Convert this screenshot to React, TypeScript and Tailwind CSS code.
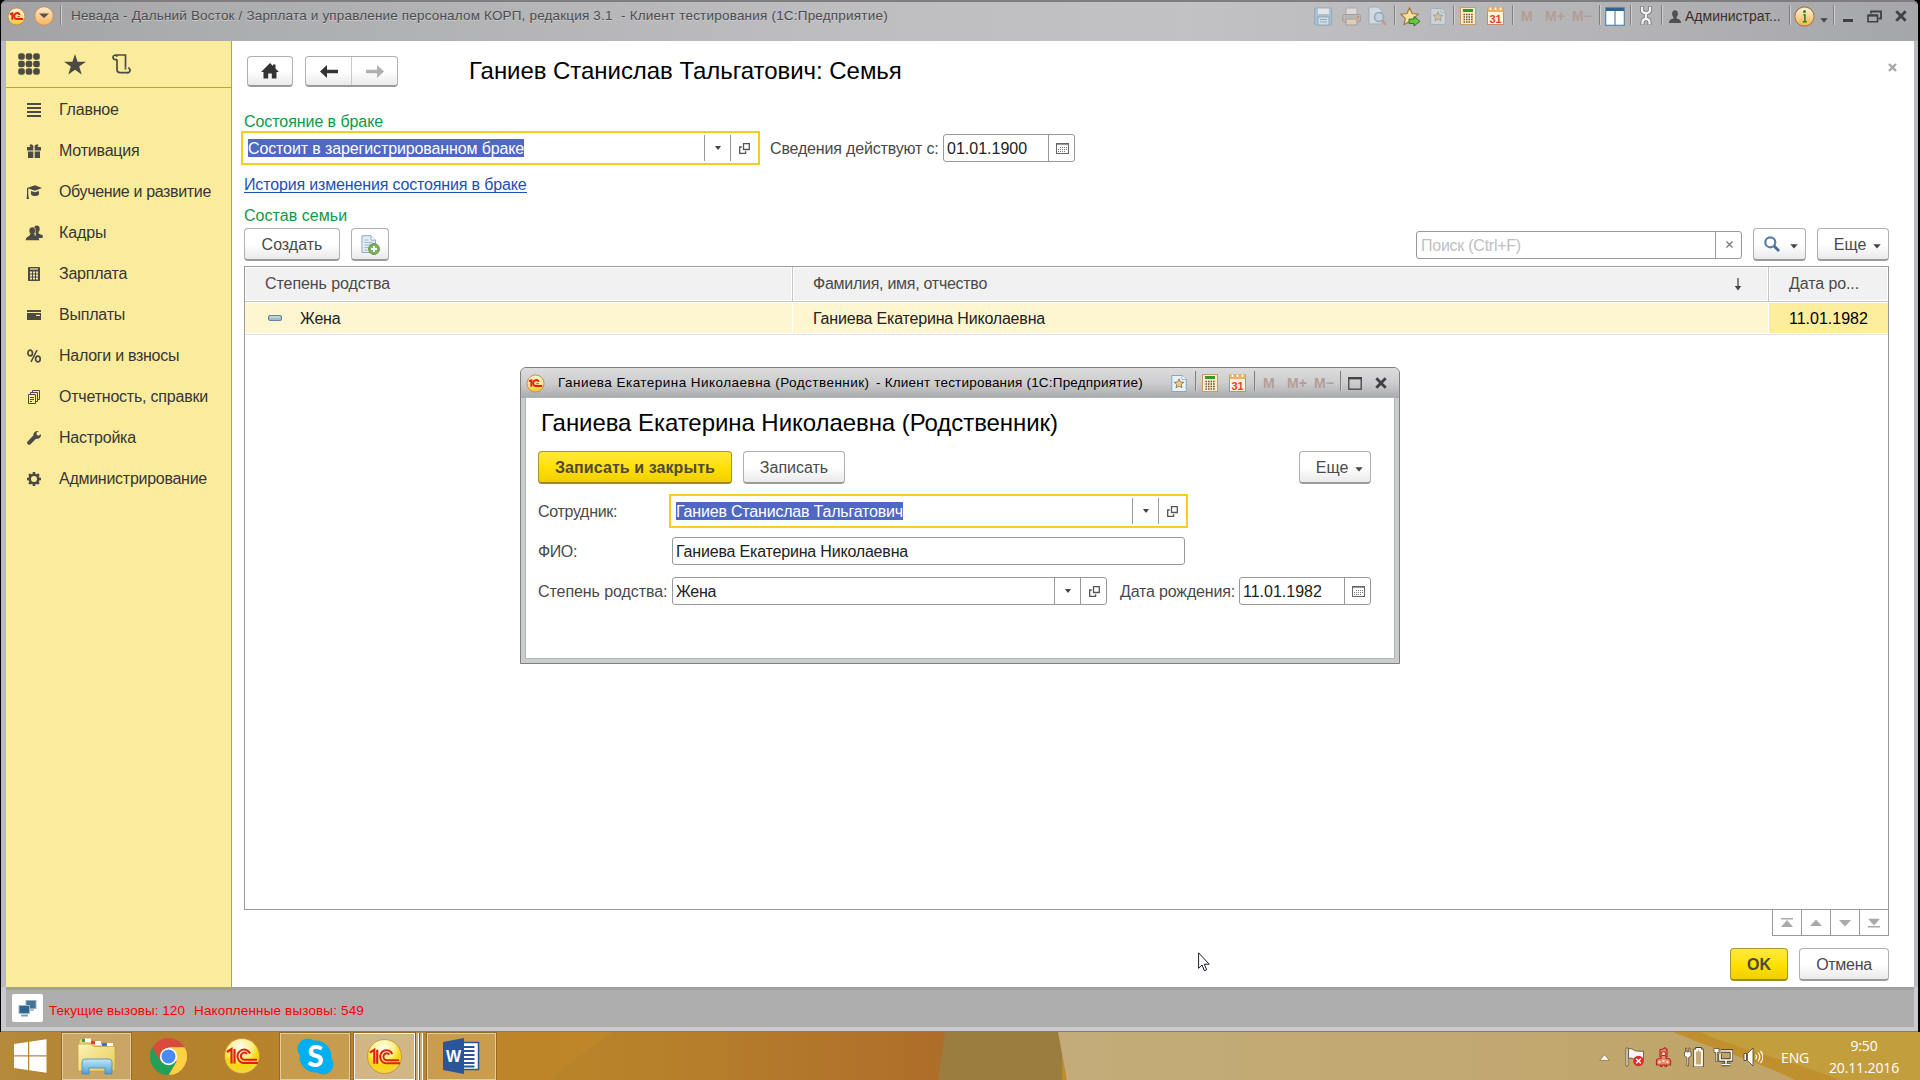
import React from "react";

type Cls = { className?: string };

/* ---------- logos and small drawings ---------- */

function Logo1C({ size }: { size: number }) {
  return (
    <svg width={size} height={size} viewBox="0 0 36 36" className="block shrink-0">
      <defs>
        <radialGradient id="ball" cx="0.45" cy="0.25" r="0.85">
          <stop offset="0" stopColor="#fffef0" />
          <stop offset="0.4" stopColor="#fdf08a" />
          <stop offset="0.6" stopColor="#f8d80c" />
          <stop offset="0.85" stopColor="#f2d640" />
          <stop offset="1" stopColor="#c9a23a" />
        </radialGradient>
      </defs>
      <circle cx="18" cy="18" r="17.5" fill="url(#ball)" stroke="#c08a3c" strokeWidth="0.8" />
      <path d="M3 14 L7.5 11 V25.5 M10.5 11 V25.5" fill="none" stroke="#e31e10" strokeWidth="2.2" />
      <path
        d="M26 15.5 A6.5 6.8 0 1 0 21 25 H34 M23 16 A3.4 3.6 0 1 0 20.5 21.8 H33"
        fill="none"
        stroke="#e31e10"
        strokeWidth="2"
      />
    </svg>
  );
}

function SmallLogo({ size }: { size: number }) {
  return (
    <svg width={size} height={size} viewBox="0 0 20 20" className="block shrink-0">
      <defs>
        <linearGradient id="sb" x1="0" y1="0" x2="0" y2="1">
          <stop offset="0" stopColor="#fdf3cf" />
          <stop offset="0.6" stopColor="#fbe48a" />
          <stop offset="1" stopColor="#f7c610" />
        </linearGradient>
      </defs>
      <circle cx="10" cy="10" r="9" fill="url(#sb)" stroke="#b98a5a" strokeWidth="1" />
      <path d="M3 7.6 L5.6 6.6 V13.4" fill="none" stroke="#e02010" strokeWidth="2" />
      <path d="M13.4 8.2 A3.1 3.1 0 1 0 11 12.6 H17" fill="none" stroke="#e02010" strokeWidth="2" />
      <path d="M11 10.2 H13.5" stroke="#e02010" strokeWidth="1" />
    </svg>
  );
}

const Caret = ({ className = "" }: Cls) => (
  <svg width="8" height="5" viewBox="0 0 8 5" className={"block shrink-0 " + className}>
    <path d="M0.3 0.3 H7.7 L4 4.6 Z" fill="#444" />
  </svg>
);

const SmallCaret = () => (
  <svg width="6" height="4" viewBox="0 0 6 4" className="block">
    <path d="M0 0 H6 L3.5 3.6 H2.5 Z" fill="#444" />
  </svg>
);

const OpenIcon = () => (
  <svg width="11" height="11" viewBox="0 0 11 11" className="block">
    <path d="M4.5 0.7 H10.3 V6.5 H4.5 Z" fill="none" stroke="#555" strokeWidth="1.3" />
    <path d="M2.8 4 H0.7 V10.3 H6.6 V8.2" fill="none" stroke="#555" strokeWidth="1.3" />
  </svg>
);

const CalIcon = () => (
  <svg width="13" height="11" viewBox="0 0 13 11" className="block" shapeRendering="crispEdges">
    <rect x="0.5" y="0.5" width="12" height="10" fill="#fff" stroke="#666" />
    <rect x="1" y="1" width="11" height="1" fill="#999" />
    <path d="M4 4.500h1m1 0h1m1 0h1m1 0h1M2 6.500h1m1 0h1m1 0h1m1 0h1m1 0h1M2 8.500h1m1 0h1m1 0h1m1 0h1" stroke="#777" strokeWidth="1" />
  </svg>
);

const DocStar = ({ className = "" }: Cls) => (
  <svg width="16" height="17" viewBox="0 0 16 17" className={"block shrink-0 " + className}>
    <path d="M0.8 0.5 H11 L15.3 4.5 V16.5 H0.8 Z" fill="#e6f1f8" stroke="#87a7bf" />
    <path d="M11 0.5 V4.5 H15.3" fill="#fff" stroke="#87a7bf" strokeWidth="0.8" />
    <path d="M8 3.8 L9.4 7 L12.8 7.3 L10.2 9.5 L11 12.8 L8 11 L5 12.8 L5.8 9.5 L3.2 7.3 L6.6 7 Z" fill="#f6cf7c" stroke="#866a4a" strokeWidth="0.8" />
  </svg>
);

const Calc = ({ className = "" }: Cls) => (
  <svg width="16" height="18" viewBox="0 0 16 18" className={"block shrink-0 " + className}>
    <rect x="0.5" y="0.5" width="15" height="17" fill="#fdecc4" stroke="#c79a68" />
    <rect x="3" y="2" width="10" height="3" fill="#2f9a28" />
    <path d="M3.500 7.500h1.500m1 0h1.500m1 0h1.500M3.500 10h1.500m1 0h1.500m1 0h1.500M3.500 12.500h1.500m1 0h1.500m1 0h1.500M3.500 15h1.500m1 0h1.500m1 0h1.500" stroke="#6a553c" strokeWidth="1.400" />
    <path d="M11 7.500h1.700" stroke="#e03020" strokeWidth="1.5" />
    <path d="M11 10h1.700M11 12.500h1.700M11 15h1.700" stroke="#6a553c" strokeWidth="1.400" />
  </svg>
);

const Cal31 = ({ className = "" }: Cls) => (
  <svg width="17" height="18" viewBox="0 0 17 18" className={"block shrink-0 " + className}>
    <rect x="0.5" y="1" width="16" height="16.5" fill="#fff3e0" stroke="#c98a68" />
    <rect x="0.5" y="0.5" width="16" height="4.5" fill="#e9b268" />
    <path d="M3.5 0.5 V3 M8.5 0.5 V3 M13.5 0.5 V3" stroke="#fff" strokeWidth="1.6" />
    <text x="8.6" y="15.8" textAnchor="middle" fontFamily="Liberation Sans" fontWeight="bold" fontSize="11" fill="#e8402a">31</text>
  </svg>
);

const Sep = ({ className = "" }: Cls) => (
  <div className={"w-px h-5 shrink-0 self-start mt-[3px] bg-[#808083] shadow-[1px_0_0_#cfcfd2] " + className} />
);

/* ---------- form pieces ---------- */

const btn =
  "flex items-center justify-center h-[33px] pt-[2px] rounded-[4px] border border-[#b0b0b0] border-b-2 border-b-[#9a9a9a] bg-gradient-to-b from-white from-50% to-[#eaeaea] text-[#4a4a4a]";
const yellowBtn =
  "flex items-center justify-center h-[33px] pt-[2px] rounded-[4px] border border-[#a8952a] border-b-2 border-b-[#9f8a1c] bg-gradient-to-b from-[#ffe93a] via-[#ffe100] to-[#f0cf00] font-bold text-[#4d4a3a]";

function Side({ children, tall }: { children: React.ReactNode; tall?: boolean }) {
  return <div className={"w-[26px] pl-[1px] flex items-center justify-center border-l border-[#999] " + (tall ? "h-[26px]" : "h-full")}>{children}</div>;
}

function Picker({ value, className, focused, text }: { value: string; className: string; focused?: boolean; text: string }) {
  return (
    <div className={(focused ? "h-[34px] border-2 border-[#facc1e] pl-[5px] pr-[2px] " : "h-[28px] border border-[#999] rounded-[3px] pl-[3px] ") + "flex items-center bg-white " + className}>
      <div className="flex-1 flex">
        <span className={(focused ? "bg-[#4f68c4] text-white " : "text-[#222] ") + "h-[18px] leading-[20px] whitespace-nowrap " + text}>{value}</span>
      </div>
      <Side tall={focused}><SmallCaret /></Side>
      <Side tall={focused}><OpenIcon /></Side>
    </div>
  );
}

function DateField({ value }: { value: string }) {
  return (
    <div className="w-[132px] h-[28px] border border-[#999] rounded-[3px] bg-white flex items-center pl-[3px]">
      <span className="flex-1 pt-[2px] text-[#222]">{value}</span>
      <Side><CalIcon /></Side>
    </div>
  );
}

/* ---------- sidebar ---------- */

const G = "#4b4a45";
const sections: { label: string; track: string; icon: React.ReactNode }[] = [
  { label: "Главное", track: "tracking-[-0.2px]", icon: <path d="M0 1h14M0 5h14M0 9h14M0 13h14" stroke={G} strokeWidth="1.8" /> },
  {
    label: "Мотивация", track: "tracking-[-0.2px]",
    icon: <g fill={G}><path d="M0 3h6.3v3.4H0zM7.7 3H14v3.4H7.7zM1 7.4h5.3V14H1zM7.7 7.4H13V14H7.7z" /><path d="M6.6 3C3 3 2 2 2.8 .9 4-.4 6 .8 6.6 3zM7.4 3C11 3 12 2 11.2 .9 10-.4 8 .8 7.4 3z" /></g>,
  },
  {
    label: "Обучение и развитие", track: "tracking-[-0.345px]",
    icon: <g fill={G}><path d="M0 3L8 .3 15 3 8 5.8z" /><path d="M4 6l4 1.3L12 6v3.5c-2 2-6 2-8 0z" /><path d="M0 3h1.3v6.5L2 14H-.4L0 9.5z" /></g>,
  },
  {
    label: "Кадры", track: "tracking-[-0.1px]",
    icon: <g fill={G}><ellipse cx="9.800" cy="3" rx="2.900" ry="3.400" /><path d="M8.500 6h3v1.500l4.200 1.800V12H9z" /><ellipse cx="5.300" cy="4.800" rx="3.300" ry="3.900" stroke="#fbeb9e" strokeWidth=".6" /><path d="M-1.200 14.300c0-4.300 3.800-3.300 4.500-6.300h4c.7 3 5 2 5 6.300z" /></g>,
  },
  {
    label: "Зарплата", track: "tracking-[-0.25px]",
    icon: <g><rect x="1" y="0" width="12" height="14" rx=".8" fill={G} /><path d="M3 2h8" stroke="#fbeb9e" strokeWidth="1.2" /><path d="M3 5.500h2m1 0h2m1 0h2M3 8.500h2m1 0h2m1 0h2M3 11.500h2m1 0h2m1 0h2" stroke="#fbeb9e" strokeWidth="2" /></g>,
  },
  { label: "Выплаты", track: "tracking-[-0.2px]", icon: <g fill={G}><path d="M0 2h14v2H0zM0 5h14v7H0z" /><path d="M9 6.800h4v1.200H9z" fill="#fbeb9e" /></g> },
  { label: "Налоги и взносы", track: "tracking-[-0.28px]", icon: <g fill="none" stroke={G}><ellipse cx="3.200" cy="4" rx="2.300" ry="2.900" strokeWidth="1.700" /><ellipse cx="10.900" cy="10" rx="2.300" ry="2.900" strokeWidth="1.700" /><path d="M10 1.200L4 12.900" strokeWidth="1.500" /></g> },
  { label: "Отчетность, справки", track: "tracking-[-0.21px]", icon: <g fill="none" stroke={G} strokeWidth="1"><path d="M1.500 4.500h7v9h-7zM3.500 4V2.500h7v9H9M5.500 2V.5h7v9H11" /><path d="M3 7.500h4M3 9.500h4M3 11.500h2" /></g> },
  { label: "Настройка", track: "tracking-[-0.2px]", icon: <path d="M14 3.200l-2.800 1.600-1.700-1.300L9.700 1.500 11.600.2C9-.5 6.300 1 6.300 4.500L.6 10.600c-1.600 2 1 4.300 2.900 2.700L9 7.800c3 .6 5.300-1.600 5-4.600z" fill={G} /> },
  {
    label: "Администрирование", track: "tracking-[-0.27px]",
    icon: <g><circle cx="7" cy="7" r="4.300" fill="none" stroke={G} strokeWidth="2.600" /><g stroke={G} strokeWidth="2.600"><path d="M7 0v2.500M7 11.500V14M0 7h2.500M11.500 7H14M2.100 2.100l1.600 1.600M10.300 10.300l1.600 1.600M2.100 11.900l1.600-1.600M10.300 3.700l1.600-1.600" /></g></g>,
  },
];

function Sidebar() {
  return (
    <nav className="w-[226px] shrink-0 bg-[#fbec9d] border-r border-[#b9a82a]">
      <div className="h-[47px] border-b border-[#b9a82a] flex items-center pl-3 gap-6">
        <svg width="22" height="22" viewBox="0 0 22 22" fill={G}>
          {[3.5, 11, 18.5].map((y) => [3.5, 11, 18.5].map((x) => <rect key={x + "-" + y} x={x - 3.3} y={y - 3.3} width="6.6" height="6.600" rx="2.4" />))}
        </svg>
        <svg width="22" height="21" viewBox="0 0 22 21" fill={G}><path d="M11 0l2.600 7.700H22l-6.800 4.900 2.500 8L11 15.700l-6.700 4.900 2.500-8L0 7.700h8.400z" /></svg>
        <svg width="21" height="20" viewBox="0 0 21 20" fill="none" stroke={G} strokeWidth="1.700" className="ml-[2px]">
          <path d="M3.200 1H13.500V13.500M5 5.500V15.500C5 18 6 18.700 8 18.700H17M5 5.600H3.200a2.200 2.200 0 1 1 2-3M13.500 13.700v1.800M13.500 18a2.600 2.600 0 1 0 2.800-4.200" />
        </svg>
      </div>
      <div className="pt-px">
        {sections.map((s) => (
          <div key={s.label} className="h-[41px] flex items-center pl-[21px] gap-[18px] text-[#363636]">
            <svg width="14" height="14" viewBox="0 0 14 14" className="overflow-visible">{s.icon}</svg>
            <span className={"whitespace-nowrap " + s.track}>{s.label}</span>
          </div>
        ))}
      </div>
    </nav>
  );
}

/* ---------- window title bar ---------- */

const Mem = ({ className, children }: { className: string; children: string }) => (
  <span className={"font-bold text-[14px] leading-none text-[#b39d95] whitespace-nowrap " + className}>{children}</span>
);

function TitleBar() {
  return (
    <header className="h-[41px] shrink-0 border-t-2 border-[#7f7d80] rounded-t-[6px] bg-[linear-gradient(90deg,#a2a2a5_0%,#aaabad_8%,#bebec0_45%,#c2c2c4_62%,#b3b3b6_85%,#a5a6aa_100%)]">
      <div className="h-[28px] flex items-center pl-[6px]">
        <SmallLogo size={19} />
        <svg width="20" height="20" viewBox="0 0 20 20" className="ml-[8px]">
          <defs><linearGradient id="or" x1="0" y1="0" x2="0" y2="1"><stop offset="0" stopColor="#fdeacb" /><stop offset="1" stopColor="#f5b45c" /></linearGradient></defs>
          <circle cx="10" cy="10" r="9.300" fill="url(#or)" stroke="#c98e58" />
          <path d="M5 7.500h10L10 12z" fill="#5c5048" />
        </svg>
        <Sep className="ml-[6px]" />
        <span className="ml-[10px] w-[550px] text-[13.5px] tracking-[0.17px] text-[#4b4b4e] whitespace-nowrap [text-shadow:0_1px_0_#cdcdd0]">Невада - Дальний Восток / Зарплата и управление персоналом КОРП, редакция 3.1</span>
        <span className="text-[13.5px] tracking-[0.2px] text-[#4b4b4e] whitespace-nowrap [text-shadow:0_1px_0_#cdcdd0]">- Клиент тестирования (1С:Предприятие)</span>
        <div className="ml-auto h-full flex items-center">
          <svg width="19" height="19" viewBox="0 0 19 19" className="opacity-60"><rect x=".7" y="1" width="17" height="17" rx="1" fill="#9fc2dc" stroke="#6f9dbf" /><rect x="4" y="1.500" width="11" height="5.500" fill="#fff" /><rect x="4" y="10" width="11" height="8" fill="#e8f2f8" stroke="#6f9dbf" /><path d="M6 12.500h7M6 15h7" stroke="#6f9dbf" /></svg>
          <svg width="19" height="19" viewBox="0 0 19 19" className="ml-[9px] opacity-60"><path d="M4 8V1h11v7" fill="#eee" stroke="#a89a90" /><rect x=".6" y="7.500" width="18" height="7.500" rx="2" fill="#b9b4b0" stroke="#8a8a8c" /><path d="M4 12h11v6H4z" fill="#f6d9bd" stroke="#a08a7a" /><circle cx="16" cy="10" r="1" fill="#e06030" /></svg>
          <svg width="19" height="20" viewBox="0 0 19 20" className="ml-[7px] opacity-60"><path d="M1 1h9l4 4v13H1z" fill="#e4eef5" stroke="#82a5bf" /><circle cx="11" cy="11" r="4.500" fill="#c9e2f2" stroke="#7f98aa" strokeWidth="1.500" /><path d="M14 14l4 5" stroke="#c08a70" strokeWidth="2.400" /></svg>
          <Sep className="ml-[7px]" />
          <svg width="21" height="21" viewBox="0 0 21 21" className="ml-[5px] mt-[3px]"><path d="M9.500.8l2.600 5.700 6.200.7-4.600 4.200 1.200 6.100-5.400-3-5.400 3 1.200-6.100L.8 7.200l6.200-.7z" fill="#f9e0a0" stroke="#a5793a" strokeWidth="1.200" /><path d="M9 12h5V9.500l6 4.800-6 4.700v-2.500H9z" fill="#6cc244" stroke="#1f7a18" strokeWidth=".9" /></svg>
          <DocStar className="ml-[9px] opacity-45" />
          <Sep className="ml-[7px]" />
          <Calc className="ml-[6px]" />
          <Cal31 className="ml-[11px]" />
          <Sep className="ml-[8px]" />
          <Mem className="ml-[8px] w-[24px]">M</Mem>
          <Mem className="w-[27px]">M+</Mem>
          <Mem className="w-[27px]">M−</Mem>
          <Sep />
          <svg width="20" height="19" viewBox="0 0 20 19" className="ml-[5px]"><rect x=".7" y=".7" width="18.600" height="17.600" fill="#fff" stroke="#5a84a8" strokeWidth="1.200" /><rect x="1" y="1" width="18" height="3" fill="#2f6593" /><path d="M10 4v15" stroke="#5a84a8" strokeWidth="1.200" /></svg>
          <Sep className="ml-[5px]" />
          <svg width="14" height="22" viewBox="0 0 14 22" fill="none" className="ml-[8px]">
            <path d="M3 1.500v3.500Q3 8 7 8t4-3V1.500M7 8v6M3.500 20v-2.500Q3.500 14 7 14t3.500 3.500V20" stroke="#77777a" strokeWidth="4" />
            <path d="M3 2v3Q3 8 7 8t4-3V2M7 8v6M3.500 19.500v-2Q3.500 14 7 14t3.500 3.500v2" stroke="#f2f2f2" strokeWidth="2.300" />
          </svg>
          <Sep className="ml-[8px]" />
          <svg width="12" height="13" viewBox="0 0 12 13" fill="#4f4f52" className="ml-[7px]"><ellipse cx="6" cy="3.800" rx="2.900" ry="3.600" /><path d="M4.500 6h3v2.500c2.500.3 4.500 1.500 4.500 4.500H0c0-3 2-4.200 4.500-4.500z" /></svg>
          <span className="ml-[4px] text-[14px] leading-none w-[104px] text-[#3d3023]">Администрат...</span>
          <Sep />
          <svg width="21" height="21" viewBox="0 0 21 21" className="ml-[4px]"><defs><linearGradient id="in" x1="0" y1="0" x2="0" y2="1"><stop offset="0" stopColor="#fff4dc" /><stop offset="1" stopColor="#f5b34c" /></linearGradient></defs><circle cx="10.500" cy="10.500" r="9.600" fill="url(#in)" stroke="#a97b48" strokeWidth="1.100" /><circle cx="10.500" cy="5.500" r="1.500" fill="#35801c" /><path d="M9.300 8.800h1.600v6.700M8.800 15.700h4" fill="none" stroke="#35801c" strokeWidth="1.600" /></svg>
          <Caret className="ml-[5px] mt-[8px]" />
          <Sep className="ml-[5px]" />
          <svg width="10" height="4" viewBox="0 0 10 4" className="ml-[9px] mt-[9px]"><rect width="10" height="3" fill="#404042" /></svg>
          <svg width="15" height="13" viewBox="0 0 15 13" fill="none" stroke="#404042" className="ml-[14px]"><path d="M4 3.500V1.500h10v7h-2.500" strokeWidth="1.800" /><path d="M1 5.200h9.500v6.600H1z" strokeWidth="1.600" /><path d="M1 5.500h9.500" strokeWidth="2.200" /></svg>
          <svg width="12" height="12" viewBox="0 0 12 12" className="ml-[13px] mr-[11px]"><path d="M1.300 1.300l9.400 9.400M10.700 1.300L1.300 10.700" stroke="#404042" strokeWidth="2.800" /></svg>
        </div>
      </div>
    </header>
  );
}

/* ---------- main form ---------- */

function NavCell({ d, last }: { d: string; last?: boolean }) {
  return (
    <div className={"flex items-center justify-center " + (last ? "w-[28px]" : "w-[29px] border-r border-[#999]")}>
      <svg width="12" height="10" viewBox="0 0 12 10" fill="#a9a9a9"><path d={d} /></svg>
    </div>
  );
}

function MainForm() {
  return (
    <main className="flex-1 bg-white pl-3 pr-[25px] pt-[15px] flex flex-col">
      <div className="h-[31px] flex items-center shrink-0">
        <div className={btn + " ml-[3px] w-[46px] !h-[31px] !pt-0"}>
          <svg width="18" height="16" viewBox="0 0 18 16" fill="#333"><path d="M9 0l3 3V1.500h2.500v4L18 9h-2.500v6.500h-4.700V10.500H7.200v5H2.500V9H0z" /></svg>
        </div>
        <div className={btn + " ml-[12px] w-[93px] !h-[31px] !pt-0"}>
          <div className="flex-1 flex justify-center"><svg width="18" height="13" viewBox="0 0 18 13"><path d="M0 6.500L7 0v4.800h11v3.400H7V13z" fill="#333" /></svg></div>
          <div className="w-px h-full bg-[#c9c9c9]" />
          <div className="flex-1 flex justify-center"><svg width="18" height="13" viewBox="0 0 18 13"><path d="M18 6.500L11 0v4.800H0v3.400h11V13z" fill="#b0b0b0" /></svg></div>
        </div>
        <h1 className="ml-[71px] -mt-[2px] text-[24px] leading-none tracking-[-0.05px] text-black whitespace-nowrap">Ганиев Станислав Тальгатович: Семья</h1>
        <svg width="9" height="9" viewBox="0 0 9 9" className="ml-auto -mr-[8px] -mt-[8px]"><path d="M1 1l7 7M8 1L1 8" stroke="#a6a6a6" strokeWidth="2.300" /></svg>
      </div>
      <div className="mt-[25px] h-[19px] leading-5 text-[#0c9a47] tracking-[-0.07px]">Состояние в браке</div>
      <div className="h-[34px] flex items-center">
        <Picker focused value="Состоит в зарегистрированном браке" className="-ml-[3px] w-[519px]" text="tracking-[-0.12px]" />
        <span className="ml-[10px] pt-[2px] w-[173px] text-[#4a4a4a] tracking-[-0.17px]">Сведения действуют с:</span>
        <DateField value="01.01.1900" />
      </div>
      <div className="mt-[9px] h-5 flex">
        <a className="h-[19px] leading-[22px] text-[#1d50b0] border-b border-[#1d50b0] tracking-[-0.155px]">История изменения состояния в браке</a>
      </div>
      <div className="mt-[11px] h-5 leading-[22px] text-[#0c9a47] tracking-[0.05px]">Состав семьи</div>
      <div className="mt-[3px] h-[33px] flex items-center">
        <div className={btn + " w-[96px]"}>Создать</div>
        <div className={btn + " ml-[11px] w-[38px]"}>
          <svg width="19" height="20" viewBox="0 0 19 20"><path d="M1 .7h9l4.500 4.500V17.500H1z" fill="#e1edf6" stroke="#8fa9bd" /><path d="M10 .7v4.500h4.500" fill="#fff" stroke="#8fa9bd" /><path d="M3.500 5h4M3.500 7.500h8M3.500 10h6M3.500 12.500h4M3.500 15h3" stroke="#a3b9ca" /><circle cx="13" cy="14" r="5.400" fill="#7fb35a" stroke="#5f9040" /><path d="M13 11v6M10 14h6" stroke="#fff" strokeWidth="2" /></svg>
        </div>
        <div className="ml-auto w-[326px] h-[28px] border border-[#999] rounded-[3px] flex items-center pl-[4px]">
          <span className="flex-1 pt-[2px] text-[#c0c0c0] tracking-[-0.25px]">Поиск (Ctrl+F)</span>
          <Side><svg width="7" height="7" viewBox="0 0 7 7"><path d="M.5.5l6 6M6.500.5l-6 6" stroke="#777" strokeWidth="1.200" /></svg></Side>
        </div>
        <div className={btn + " ml-[11px] w-[53px] gap-[10px] pl-[3px]"}>
          <svg width="16" height="16" viewBox="0 0 16 16" fill="none" className="-mt-[2px]"><circle cx="6.300" cy="6.300" r="5" stroke="#5b7da3" strokeWidth="2.200" /><path d="M10 10l5 5" stroke="#4b6d93" strokeWidth="2.800" /></svg>
          <Caret className="mt-[3px]" />
        </div>
        <div className={btn + " ml-[11px] w-[72px] gap-[7px] pl-[9px]"}>Еще<Caret className="mt-[3px]" /></div>
      </div>

      <div className="mt-[5px] h-[644px] border border-[#999] flex flex-col shrink-0">
        <div className="h-[35px] border-b border-[#c6c6c6] flex items-center text-[#4a4a4a] p-px">
          <div className="w-[545px] h-full bg-[#f1f1f1] flex items-center pl-[19px] tracking-[-0.07px]">Степень родства</div>
          <div className="w-px h-[34px] mx-px bg-[#c6c6c6]" />
          <div className="flex-1 h-full bg-[#f1f1f1] flex items-center pl-[19px] pr-[25px]">
            <span className="flex-1 tracking-[-0.27px]">Фамилия, имя, отчество</span>
            <svg width="8" height="13" viewBox="0 0 8 13"><path d="M4 0v10" stroke="#444" strokeWidth="1.300" /><path d="M.7 8h6.600L4 12.500z" fill="#444" /></svg>
          </div>
          <div className="w-px h-[34px] mx-px bg-[#c6c6c6]" />
          <div className="w-[117px] h-full bg-[#f1f1f1] flex items-center pl-[19px] tracking-[-0.1px]">Дата ро...</div>
        </div>
        <div className="h-[33px] border-b border-[#e4e4e4] flex py-px text-[#222] gap-px">
          <div className="w-[547px] bg-[#fdf6d0] flex items-center pl-[23px]">
            <svg width="14" height="6" viewBox="0 0 14 6"><rect x=".5" y=".5" width="13" height="5" rx="1.500" fill="#9fbdd0" stroke="#63849c" /><path d="M2 2h10" stroke="#d8e8f2" /></svg>
            <span className="ml-[18px] pt-[2px] tracking-[-0.2px]">Жена</span>
          </div>
          <div className="flex-1 bg-[#fdf6d0] flex items-center pl-[20px] pt-[2px] tracking-[-0.186px]">Ганиева Екатерина Николаевна</div>
          <div className="w-[119px] bg-[#fcee9c] flex items-center pl-[20px] pt-[2px] text-black">11.01.1982</div>
        </div>
      </div>
      <div className="h-[27px] -mt-px shrink-0 self-end border border-[#999] flex">
        <NavCell d="M0 0h12v1.500H0zM6 2l6 7H0z" />
        <NavCell d="M6 1.500l6 6.500H0z" />
        <NavCell d="M6 8.500L0 2h12z" />
        <NavCell last d="M6 7.500L0 .8h12zM0 8h12v1.500H0z" />
      </div>
      <div className="mt-3 flex justify-end gap-[11px]">
        <div className={yellowBtn + " w-[58px]"}>OK</div>
        <div className={btn + " w-[90px] tracking-[-0.3px]"}>Отмена</div>
      </div>
    </main>
  );
}

/* ---------- relative card dialog ---------- */

function Dialog() {
  return (
    <section className="absolute left-[520px] top-[367px] w-[880px] h-[297px] border border-[#7f7f82] rounded-t-[6px] bg-[#cbcccf] flex flex-col">
      <div className="h-[30px] shrink-0 rounded-t-[5px] bg-gradient-to-b from-[#dcdcdd] via-[#cdcdcf] to-[#a9aaad] flex items-center pl-[5px] text-black">
        <SmallLogo size={19} />
        <span className="ml-[13px] w-[316px] text-[13.5px] tracking-[0.46px] whitespace-nowrap">Ганиева Екатерина Николаевна (Родственник)</span>
        <span className="ml-[2px] text-[13.5px] tracking-[0.2px] whitespace-nowrap">- Клиент тестирования (1С:Предприятие)</span>
        <div className="ml-auto h-full flex items-center">
          <DocStar />
          <Sep className="ml-[8px]" />
          <Calc className="ml-[6px]" />
          <Cal31 className="ml-[11px]" />
          <Sep className="ml-[8px]" />
          <Mem className="ml-[8px] w-[24px]">M</Mem>
          <Mem className="w-[27px]">M+</Mem>
          <Mem className="w-[26px]">M−</Mem>
          <Sep />
          <svg width="14" height="13" viewBox="0 0 14 13" className="ml-[7px]"><rect x=".8" y=".8" width="12.400" height="11.400" fill="none" stroke="#444" strokeWidth="1.300" /><path d="M0 1.200h14" stroke="#444" strokeWidth="2.400" /></svg>
          <svg width="12" height="12" viewBox="0 0 12 12" className="ml-[13px] mr-[12px] -mt-px"><path d="M1.300 1.300l9.400 9.400M10.700 1.300L1.300 10.700" stroke="#404042" strokeWidth="2.800" /></svg>
        </div>
      </div>
      <div className="flex-1 mx-[5px] mb-[5px] bg-white shadow-[0_0_0_1px_#b4b5b8] pl-3 pr-[23px] flex flex-col text-[#4a4a4a]">
        <h2 className="mt-[13px] ml-[3px] text-[24px] leading-6 tracking-[-0.06px] text-black whitespace-nowrap">Ганиева Екатерина Николаевна (Родственник)</h2>
        <div className="mt-4 flex items-center">
          <div className={yellowBtn + " w-[194px] tracking-[0.08px]"}>Записать и закрыть</div>
          <div className={btn + " ml-[11px] w-[102px]"}>Записать</div>
          <div className={btn + " ml-auto w-[72px] gap-[7px] pl-[9px]"}>Еще<Caret className="mt-[3px]" /></div>
        </div>
        <div className="mt-[10px] h-[34px] flex items-center">
          <span className="w-[131px] pt-[2px] tracking-[-0.3px]">Сотрудник:</span>
          <Picker focused value="Ганиев Станислав Тальгатович" className="w-[519px]" text="tracking-[-0.19px]" />
        </div>
        <div className="mt-[9px] h-[28px] flex items-center">
          <span className="w-[134px] pt-[2px] tracking-[-0.4px]">ФИО:</span>
          <div className="w-[513px] h-full border border-[#999] rounded-[3px] flex items-center pl-[3px] pt-[2px] text-[#222] tracking-[-0.186px]">Ганиева Екатерина Николаевна</div>
        </div>
        <div className="mt-[12px] h-[28px] flex items-center">
          <span className="w-[134px] pt-[2px] whitespace-nowrap tracking-[-0.07px]">Степень родства:</span>
          <Picker value="Жена" className="w-[435px]" text="tracking-[-0.3px]" />
          <span className="ml-[13px] pt-[2px] w-[119px] whitespace-nowrap tracking-[-0.165px]">Дата рождения:</span>
          <DateField value="11.01.1982" />
        </div>
      </div>
    </section>
  );
}

/* ---------- Windows taskbar ---------- */

const TaskBtn = ({ className, children }: { className: string; children: React.ReactNode }) => (
  <div className={"h-[47px] flex items-center justify-center border shadow-[0_0_0_1px_#7d5c1e99] " + className}>{children}</div>
);

function Taskbar() {
  return (
    <footer className="relative h-12 shrink-0 overflow-hidden font-['Open_Sans',sans-serif]">
      <svg width="1920" height="48" viewBox="0 0 1920 48" className="absolute inset-0 block">
        <defs>
          <linearGradient id="t1"><stop offset="0" stopColor="#b58a3c" /><stop offset=".08" stopColor="#b3812d" /><stop offset=".25" stopColor="#bd8528" /><stop offset=".5" stopColor="#c08a2b" /><stop offset="1" stopColor="#c28d2b" /></linearGradient>
          <linearGradient id="t2"><stop offset="0" stopColor="#b98529" /><stop offset=".45" stopColor="#b57c2b" /><stop offset="1" stopColor="#ae6d2a" /></linearGradient>
          <linearGradient id="t3"><stop offset="0" stopColor="#c3ac79" /><stop offset="1" stopColor="#c0a469" /></linearGradient>
        </defs>
        <rect width="1920" height="48" fill="url(#t1)" />
        <path d="M612 0H950V48H548Z" fill="url(#t2)" />
        <path d="M945 0H1062V48H938Z" fill="#9b7e3f" />
        <path d="M1058 0H1700L1800 48H1067Z" fill="url(#t3)" />
        <path d="M1673 0H1920V48H1795C1760 30 1710 16 1673 0Z" fill="#c0902f" />
        <path d="M1700 0H1920V48H1840C1790 28 1740 18 1700 0Z" fill="#c39e3d" />
      </svg>
      <div className="relative h-full flex items-center">
        <svg width="33" height="34" viewBox="0 0 33 34" fill="#fff" className="ml-[14px]"><path d="M0 5l14-2v13.300H0zM15.300 2.800L32.500.3v16H15.300zM0 17.600h14V31L0 29zM15.300 17.600h17.200v16.100l-17.200-2.500z" /></svg>
        <TaskBtn className="ml-[15px] w-[69px] bg-[#d3b680aa] border-[#e3cda0]">
          <svg width="40" height="40" viewBox="0 0 40 40">
            <defs><linearGradient id="fo" x1="0" y1="0" x2="1" y2="1"><stop offset="0" stopColor="#fbf3b8" /><stop offset="1" stopColor="#ecc94e" /></linearGradient><linearGradient id="bl" x1="0" y1="0" x2="0" y2="1"><stop offset="0" stopColor="#c4e6f7" /><stop offset="1" stopColor="#4c9fd0" /></linearGradient></defs>
            <path d="M2 4l3-2h8l2 3h6l2 2h5l2 2h8v8H2z" fill="#e9d27c" stroke="#b9963c" strokeWidth=".8" />
            <path d="M5 2.500h9V6H5z" fill="#fff" /><path d="M5 2.500h3V6H5z" fill="#3aa03c" />
            <path d="M14 5h10v4H14z" fill="#fff" /><path d="M14 5h4v3.500h-4z" fill="#e04028" />
            <path d="M25 7h11v4H25z" fill="#fff" /><path d="M25 7h5v3.500h-5z" fill="#2b7fd0" />
            <path d="M1 8h13l3 2.500h21V35H1z" fill="url(#fo)" stroke="#c9a445" strokeWidth=".8" />
            <path d="M5 38V27c0-3 1-4 4-4h22c3 0 4 1 4 4v11h-7v-6H12v6z" fill="url(#bl)" stroke="#3d8cbc" strokeWidth=".8" />
          </svg>
        </TaskBtn>
        <svg width="37" height="37" viewBox="0 0 36 36" className="ml-[19px]">
          <circle cx="18" cy="18" r="18" fill="#da4a3c" />
          <path d="M18 9H33.600A18 18 0 0 1 18 36L25.800 22.500Z" fill="#fdd142" />
          <path d="M2.400 9A18 18 0 0 0 18 36L25.800 22.500H10.200Z" fill="#22a05a" />
          <circle cx="18" cy="18" r="8.400" fill="#fff" /><circle cx="18" cy="18" r="6.800" fill="#4a8af4" />
        </svg>
        <div className="ml-[37px]"><Logo1C size={36} /></div>
        <TaskBtn className="ml-[20px] w-[70px] bg-[#cfa860aa] border-[#e3cda0]">
          <svg width="37" height="37" viewBox="0 0 36 36"><circle cx="18" cy="18" r="15.500" fill="#00aff0" /><circle cx="10.500" cy="10.500" r="10" fill="#00aff0" /><circle cx="25.500" cy="25.500" r="10" fill="#00aff0" /><text x="18" y="28" textAnchor="middle" fontFamily="Lato" fontWeight="900" fontSize="29" fill="#fff">S</text></svg>
        </TaskBtn>
        <TaskBtn className="ml-[4px] w-[61px] bg-[#d6bd94dd] border-white"><Logo1C size={35} /></TaskBtn>
        <div className="h-[47px] w-[4px] border-r border-[#fff] bg-[#c9ac78] shadow-[inset_1px_0_0_#7d5c1e]" />
        <div className="h-[47px] w-[4px] border-r border-[#fff] bg-[#c9ac78] shadow-[inset_1px_0_0_#7d5c1e]" />
        <TaskBtn className="ml-[4px] w-[69px] bg-[#d0a860aa] border-[#e3cda0]">
          <svg width="37" height="36" viewBox="0 0 37 36"><path d="M20 4.500h15.500v27H20z" fill="#fff" stroke="#2a5699" strokeWidth="1.500" /><path d="M21 9h10.500M21 13h10.500M21 17h10.500M21 21h10.500M21 25h10.500M21 28.500h10.500" stroke="#2a5699" strokeWidth="1.800" /><path d="M0 4L21 0v36L0 32z" fill="#2a5699" /><text x="10.500" y="24" textAnchor="middle" fontFamily="Liberation Sans" fontWeight="bold" fontSize="16" fill="#fff">W</text></svg>
        </TaskBtn>
        <div className="ml-auto pt-[2px] flex items-center text-white">
          <svg width="11" height="7" viewBox="0 0 11 7"><path d="M5.500 .8l4.800 5.500H.7z" fill="#fff" stroke="#806a40" strokeWidth=".7" /></svg>
          <svg width="20" height="20" viewBox="0 0 20 20" className="ml-[15px]"><path d="M1 1h2v18H1z" fill="#fff" stroke="#4b3d22" strokeWidth=".7" /><path d="M3.500 2c4-1.500 5 2 8 2s4 1 7 0v9c-3 1-5 0-7 0s-4-3-8-1.500z" fill="#f4f4f4" stroke="#4b3d22" strokeWidth=".7" /><circle cx="13.500" cy="14" r="5.300" fill="#dd2b2b" /><path d="M11.200 11.700l4.600 4.600M15.800 11.700l-4.600 4.600" stroke="#fff" strokeWidth="1.500" /></svg>
          <svg width="17" height="20" viewBox="0 0 17 20" className="ml-[10px]"><path d="M5 2.500h2L10 .8l2 1.700V9.500h-1v2h3l1.500 2V18h-4v1.500h-1.500V18H7v1.500H5.500V18h-4v-4.500l1.500-2h3v-2H5z" fill="#e88a74" stroke="#b22c18" strokeWidth="1.200" /><rect x="6.800" y="5" width="3.500" height="3.500" fill="#fff" stroke="#b22c18" /><path d="M3.500 15h2M11.500 15h2M7.500 14h2" stroke="#fff" fill="none" strokeWidth="1.300" /></svg>
          <svg width="20" height="20" viewBox="0 0 20 20" className="ml-[12px]"><path d="M1.500 1v4H.5v4l2.500 1.500V19h1.600v-8.500L7 9V5H6V1H4.800v4H2.800V1z" fill="#fff" stroke="#4b3d22" strokeWidth=".7" /><path d="M11 3.500h2v-1.700h3v1.700h2v15h-7z" fill="#c6ab74" stroke="#4b3d22" strokeWidth="3.400" /><path d="M11 3.500h2v-1.700h3v1.700h2v15h-7z" fill="#c6ab74" stroke="#fff" strokeWidth="1.800" /></svg>
          <svg width="20" height="20" viewBox="0 0 20 20" className="ml-[9px] mr-px" fill="none"><path d="M8 4h10.500v9H7V7M13 13v3.500M8.500 17.500h9" stroke="#4b3d22" strokeWidth="3.400" /><path d="M8 4h10.500v9H7V7M13 13v3.500M8.500 17.500h9" stroke="#fff" strokeWidth="1.700" /><path d="M1 1.500h5v4H4.300v9H2.700v-9H1z" fill="#fff" stroke="#4b3d22" strokeWidth=".7" /></svg>
          <svg width="20" height="20" viewBox="0 0 20 20" className="ml-[9px]" fill="none"><path d="M1 6.500h2.500v7H1zM4.500 6.500L10 1v18l-5.500-5.500z" fill="#fff" stroke="#4b3d22" strokeWidth=".8" /><path d="M12.500 7.500c1.200 1.500 1.200 3.500 0 5M15 5.500c2.200 2.800 2.200 6.200 0 9M17.500 4c3 3.600 3 8.400 0 12" stroke="#fff" strokeWidth="1.200" /></svg>
          <span className="ml-[18px] w-[28px] text-[14px] tracking-[-0.1px]">ENG</span>
          <div className="ml-[19px] mr-[20px] w-[72px] text-center text-[14px] leading-[22px] tracking-[-0.13px]">
            <div>9:50</div>
            <div>20.11.2016</div>
          </div>
        </div>
      </div>
    </footer>
  );
}

export default function App() {
  return (
    <div className="relative w-[1920px] h-[1080px] bg-black overflow-hidden flex flex-col font-['Liberation_Sans',Arial,sans-serif] text-[16px]">
      <div className="h-[1032px] ml-[1px] mr-[2px] flex flex-col shrink-0 bg-[#b9babd] rounded-t-[6px]">
        <TitleBar />
        <div className="h-[946px] shrink-0 ml-[5px] mr-1 flex">
          <Sidebar />
          <MainForm />
        </div>
        <div className="h-[45px] border-b border-[#7f7f82] bg-[#c9cacd] pb-[4px]">
          <div className="h-[40px] ml-[5px] mr-1 border-t-[3px] border-[#a0a0a0] bg-[#aeaeae] flex items-start pl-[6px] text-[13.5px] text-[#ff0000]">
            <div className="mt-[4px] w-[31px] h-[28px] bg-white rounded-[2px] flex items-center justify-center">
              <svg width="19" height="17" viewBox="0 0 19 17"><rect x="8" y=".5" width="10" height="8" fill="#41749b" stroke="#9ab" /><path d="M10 10h6" stroke="#9ab" strokeWidth="1.500" /><rect x="1" y="5.500" width="10.500" height="8" fill="#2c6590" stroke="#a9b8c4" /><path d="M3 15.500h7" stroke="#8899a5" strokeWidth="2" /></svg>
            </div>
            <span className="ml-[6px] mt-[11px] leading-5 w-[145px] whitespace-nowrap tracking-[0.05px]">Текущие вызовы: 120</span>
            <span className="mt-[11px] leading-5 whitespace-nowrap tracking-[0.14px]">Накопленные вызовы: 549</span>
          </div>
        </div>
      </div>
      <Taskbar />
      <Dialog />
      <svg width="12" height="20" viewBox="0 0 12 20" className="absolute left-[1198px] top-[952px]"><path d="M.6 .8v15.500l3.400-3.300 2.400 5.800 2.300-1-2.400-5.600h4.900z" fill="#fff" stroke="#1a1a2a" strokeWidth="1" /></svg>
    </div>
  );
}
